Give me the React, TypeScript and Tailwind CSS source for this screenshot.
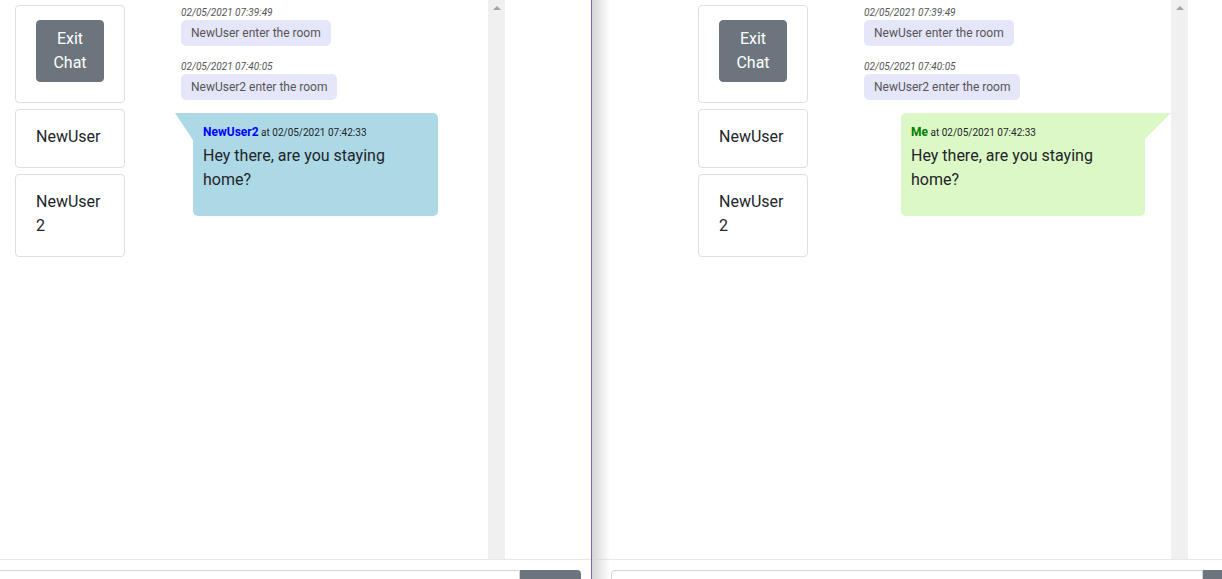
import React from "react";

const FONT = { fontFamily: 'Roboto, "Open Sans", "Noto Sans", sans-serif' };

function SysMsg({ ts, text, last }: { ts: string; text: string; last?: boolean }) {
  return (
    <div className={last ? "flex flex-col items-start" : "flex flex-col items-start mb-[14px]"}>
      <div className="ml-[6px] text-[10px] leading-[14px] italic text-[#555]">{ts}</div>
      <div className="ml-[6px] bg-[#e6e6fa] rounded-[5px] px-[10px] py-[4px] text-[12px] leading-[18px] text-[#555]">
        {text}
      </div>
    </div>
  );
}

function Card({ children, first }: { children: React.ReactNode; first?: boolean }) {
  return (
    <div
      className={
        first
          ? "border border-[#dfdfdf] rounded-[4px] px-[20px] pt-[14px] pb-[20px] bg-white"
          : "border border-[#dfdfdf] rounded-[4px] px-[20px] pt-[15px] pb-[18px] bg-white text-[16px] leading-[24px] text-[#212529]"
      }
    >
      {children}
    </div>
  );
}

function ChatArea({ me }: { me: boolean }) {
  return (
    <div className="flex w-[505px] h-[559px] shrink-0">
      <div className="flex items-start flex-1">
        <div className="mt-[5px] ml-[15px] w-[110px] flex flex-col gap-[6px] shrink-0">
          <Card first>
            <button className="w-full bg-[#6c757d] text-white border border-[#6c757d] rounded-[4px] px-[12px] py-[6px] text-[16px] leading-[24px]">
              Exit Chat
            </button>
          </Card>
          <Card>NewUser</Card>
          <Card>
            NewUser
            <br />2
          </Card>
        </div>
        <div className="mt-[6px] ml-[50px] w-[313px] flex flex-col">
          <SysMsg ts="02/05/2021 07:39:49" text="NewUser enter the room" />
          <SysMsg ts="02/05/2021 07:40:05" text="NewUser2 enter the room" last />
          {me ? (
            <div className="relative mt-[13px] ml-auto mr-[26px] w-[244px] bg-[#dcf8c6] rounded-[5px] rounded-tr-none pl-[10px] pr-[10px] pt-[9px] pb-[24px]">
              <svg className="absolute top-0 -right-[26px]" width="26" height="26" viewBox="0 0 26 26">
                <polygon points="0,0 26,0 0,26" fill="#dcf8c6" />
              </svg>
              <div className="leading-[18px] text-[#212529]">
                <span className="text-[12px] font-bold text-[#008000]">Me</span>
                <span className="text-[10px]"> at 02/05/2021 07:42:33</span>
              </div>
              <div className="mt-[2px] text-[16px] leading-[24px] text-[#212529]">
                Hey there, are you staying home?
              </div>
            </div>
          ) : (
            <div className="relative mt-[13px] ml-[18px] w-[245px] bg-[#add8e6] rounded-[5px] rounded-tl-none pl-[10px] pr-[10px] pt-[9px] pb-[24px]">
              <svg className="absolute top-0 -left-[18px]" width="18" height="27" viewBox="0 0 18 27">
                <polygon points="0,0 18,0 18,27" fill="#add8e6" />
              </svg>
              <div className="leading-[18px] text-[#212529]">
                <span className="text-[12px] font-bold text-[#0000ff]">NewUser2</span>
                <span className="text-[10px]"> at 02/05/2021 07:42:33</span>
              </div>
              <div className="mt-[2px] text-[16px] leading-[24px] text-[#212529]">
                Hey there, are you staying home?
              </div>
            </div>
          )}
        </div>
      </div>
      <div className="w-[17px] h-[559px] bg-[#f0f0f0] flex flex-col items-center shrink-0">
        <div className="mt-[6px] w-0 h-0 border-l-[4px] border-r-[4px] border-b-[4px] border-l-transparent border-r-transparent border-b-[#a3a3a3]" />
      </div>
    </div>
  );
}

export default function App() {
  return (
    <div className="flex w-[1222px] h-[579px] bg-white overflow-hidden" style={FONT}>
      <div className="w-[591px] h-[579px] flex flex-col overflow-hidden shrink-0">
        <div className="flex h-[559px]">
          <ChatArea me={false} />
        </div>
        <div className="border-t border-[#e8e8e8] pt-[10px] flex">
          <div className="ml-[-10px] w-[530px] h-[38px] border border-[#ced4da] rounded-l-[4px] shrink-0" />
          <div className="w-[61px] h-[38px] bg-[#6c757d] rounded-r-[4px] shrink-0" />
        </div>
      </div>
      <div className="w-px h-[579px] bg-[#7e63b0] shrink-0" />
      <div className="relative w-[630px] h-[579px] flex flex-col overflow-hidden shrink-0">
        <div className="flex h-[559px] pl-[91px]">
          <ChatArea me={true} />
        </div>
        <div className="border-t border-[#e8e8e8] pt-[10px] flex">
          <div className="ml-[19px] w-[592px] h-[38px] border border-[#ced4da] rounded-l-[4px] shrink-0" />
          <div className="w-[61px] h-[38px] bg-[#6c757d] rounded-r-[4px] shrink-0" />
        </div>
        <div className="absolute left-0 top-0 bottom-0 w-[18px] bg-linear-to-r from-[#d4d4d4] to-transparent pointer-events-none" />
      </div>
    </div>
  );
}
